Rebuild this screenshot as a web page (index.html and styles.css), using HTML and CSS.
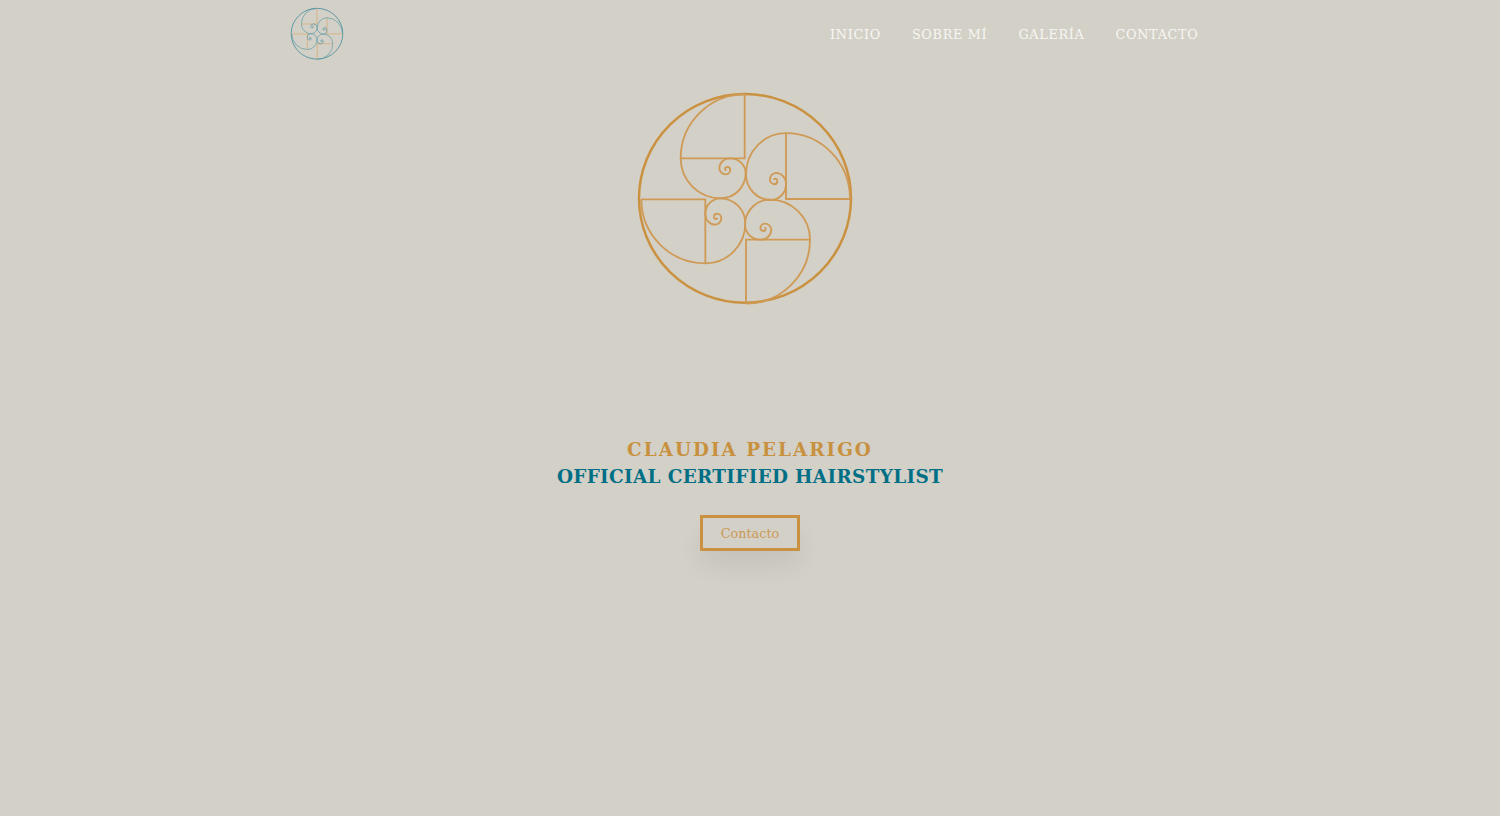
FILE: index.html
```html
<!DOCTYPE html>
<html lang="es">
<head>
<meta charset="utf-8">
<title>Claudia Pelarigo</title>
<link rel="stylesheet" href="styles.css">
</head>
<body>
<svg class="defs" width="0" height="0" aria-hidden="true">
  <defs>
    <g id="spiral-arm">
      <path class="arm-lines" d="M344 28V220H152"/>
      <path class="arm-curve" d="M344 28A192 192 0 0 0 152 220A120 120 0 0 0 272 340A75 75 0 0 0 347 265A46 46 0 0 0 301 220A31 31 0 0 0 268 250A19 19 0 0 0 287 268A14 14 0 0 0 301 255A9.500 9.500 0 0 0 292 246A6 6 0 0 0 285 252A4 4 0 0 0 289 256"/>
    </g>
    <g id="spiral-mark">
      <ellipse class="mark-ring" cx="345" cy="340" rx="318" ry="313"/>
      <use href="#spiral-arm"/>
      <use href="#spiral-arm" transform="translate(468 342) scale(1 1.03) translate(-465 -339) rotate(90 345 340)"/>
      <use href="#spiral-arm" transform="translate(2 4) rotate(180 345 340)"/>
      <use href="#spiral-arm" transform="translate(1 2) rotate(270 345 340)"/>
    </g>
  </defs>
</svg>
<header class="site-header">
  <a class="brand" href="#" aria-label="Claudia Pelarigo">
    <svg class="brand-mark" viewBox="0 0 690 675"><use href="#spiral-mark"/></svg>
  </a>
  <nav class="site-nav">
    <a href="#">INICIO</a>
    <a href="#">SOBRE MÍ</a>
    <a href="#">GALERÍA</a>
    <a href="#">CONTACTO</a>
  </nav>
</header>
<main class="hero">
  <svg class="hero-mark" viewBox="0 0 690 675"><use href="#spiral-mark"/></svg>
  <h1 class="hero-name">CLAUDIA PELARIGO</h1>
  <h2 class="hero-role">OFFICIAL CERTIFIED HAIRSTYLIST</h2>
  <a class="hero-button" href="#">Contacto</a>
</main>
</body>
</html>
```
FILE: styles.css
```css
* {
  box-sizing: border-box;
}

html,
body {
  margin: 0;
  height: 816px;
  overflow: hidden;
}

body {
  background: #d3d0c7;
  font-family: "DejaVu Serif", "Liberation Serif", serif;
}

.defs {
  display: block;
  height: 0;
}

.arm-lines,
.arm-curve,
.mark-ring {
  fill: none;
}

.site-header {
  display: flex;
  align-items: center;
  justify-content: space-between;
  height: 68px;
  padding: 0 301.500px 0 288.500px;
}

.brand {
  display: flex;
}

.brand-mark {
  width: 56px;
  height: 55px;
  margin-top: -1px;
  --ring: #5a98a4;
  --curve: #5a98a4;
  --line: #d6ae78;
  --ring-w: 12px;
  --curve-w: 8px;
  --line-w: 10px;
}

.hero-mark {
  display: block;
  width: 230px;
  height: 225px;
  margin: 17px 10px 0 0;
  --ring: #ca9240;
  --curve: #cf9a55;
  --line: #cf9a55;
  --ring-w: 7.500px;
  --curve-w: 5.500px;
  --line-w: 5.500px;
}

.mark-ring {
  stroke: var(--ring);
  stroke-width: var(--ring-w);
}

.arm-curve {
  stroke: var(--curve);
  stroke-width: var(--curve-w);
}

.arm-lines {
  stroke: var(--line);
  stroke-width: var(--line-w);
}

.site-nav {
  display: flex;
  gap: 31px;
  padding-top: 2px;
}

.site-nav a {
  color: #f8f7f3;
  font-size: 12.800px;
  letter-spacing: 0.700px;
  line-height: 20px;
  text-decoration: none;
}

.hero {
  display: flex;
  flex-direction: column;
  align-items: center;
}

.hero-name,
.hero-role {
  margin: 0;
  font-size: 18.400px;
  font-weight: 700;
  line-height: 27px;
}

.hero-name {
  margin-top: 126px;
  color: #c8913f;
  letter-spacing: 2px;
}

.hero-role {
  color: #006f85;
  letter-spacing: 0.350px;
}

.hero-button {
  display: flex;
  align-items: center;
  justify-content: center;
  width: 100px;
  height: 36px;
  margin-top: 25px;
  border: 3px solid #ca9240;
  color: #cc9a55;
  font-size: 12.800px;
  text-decoration: none;
  box-shadow: 0 16px 26px -2px rgba(0, 0, 0, 0.07);
}
```
